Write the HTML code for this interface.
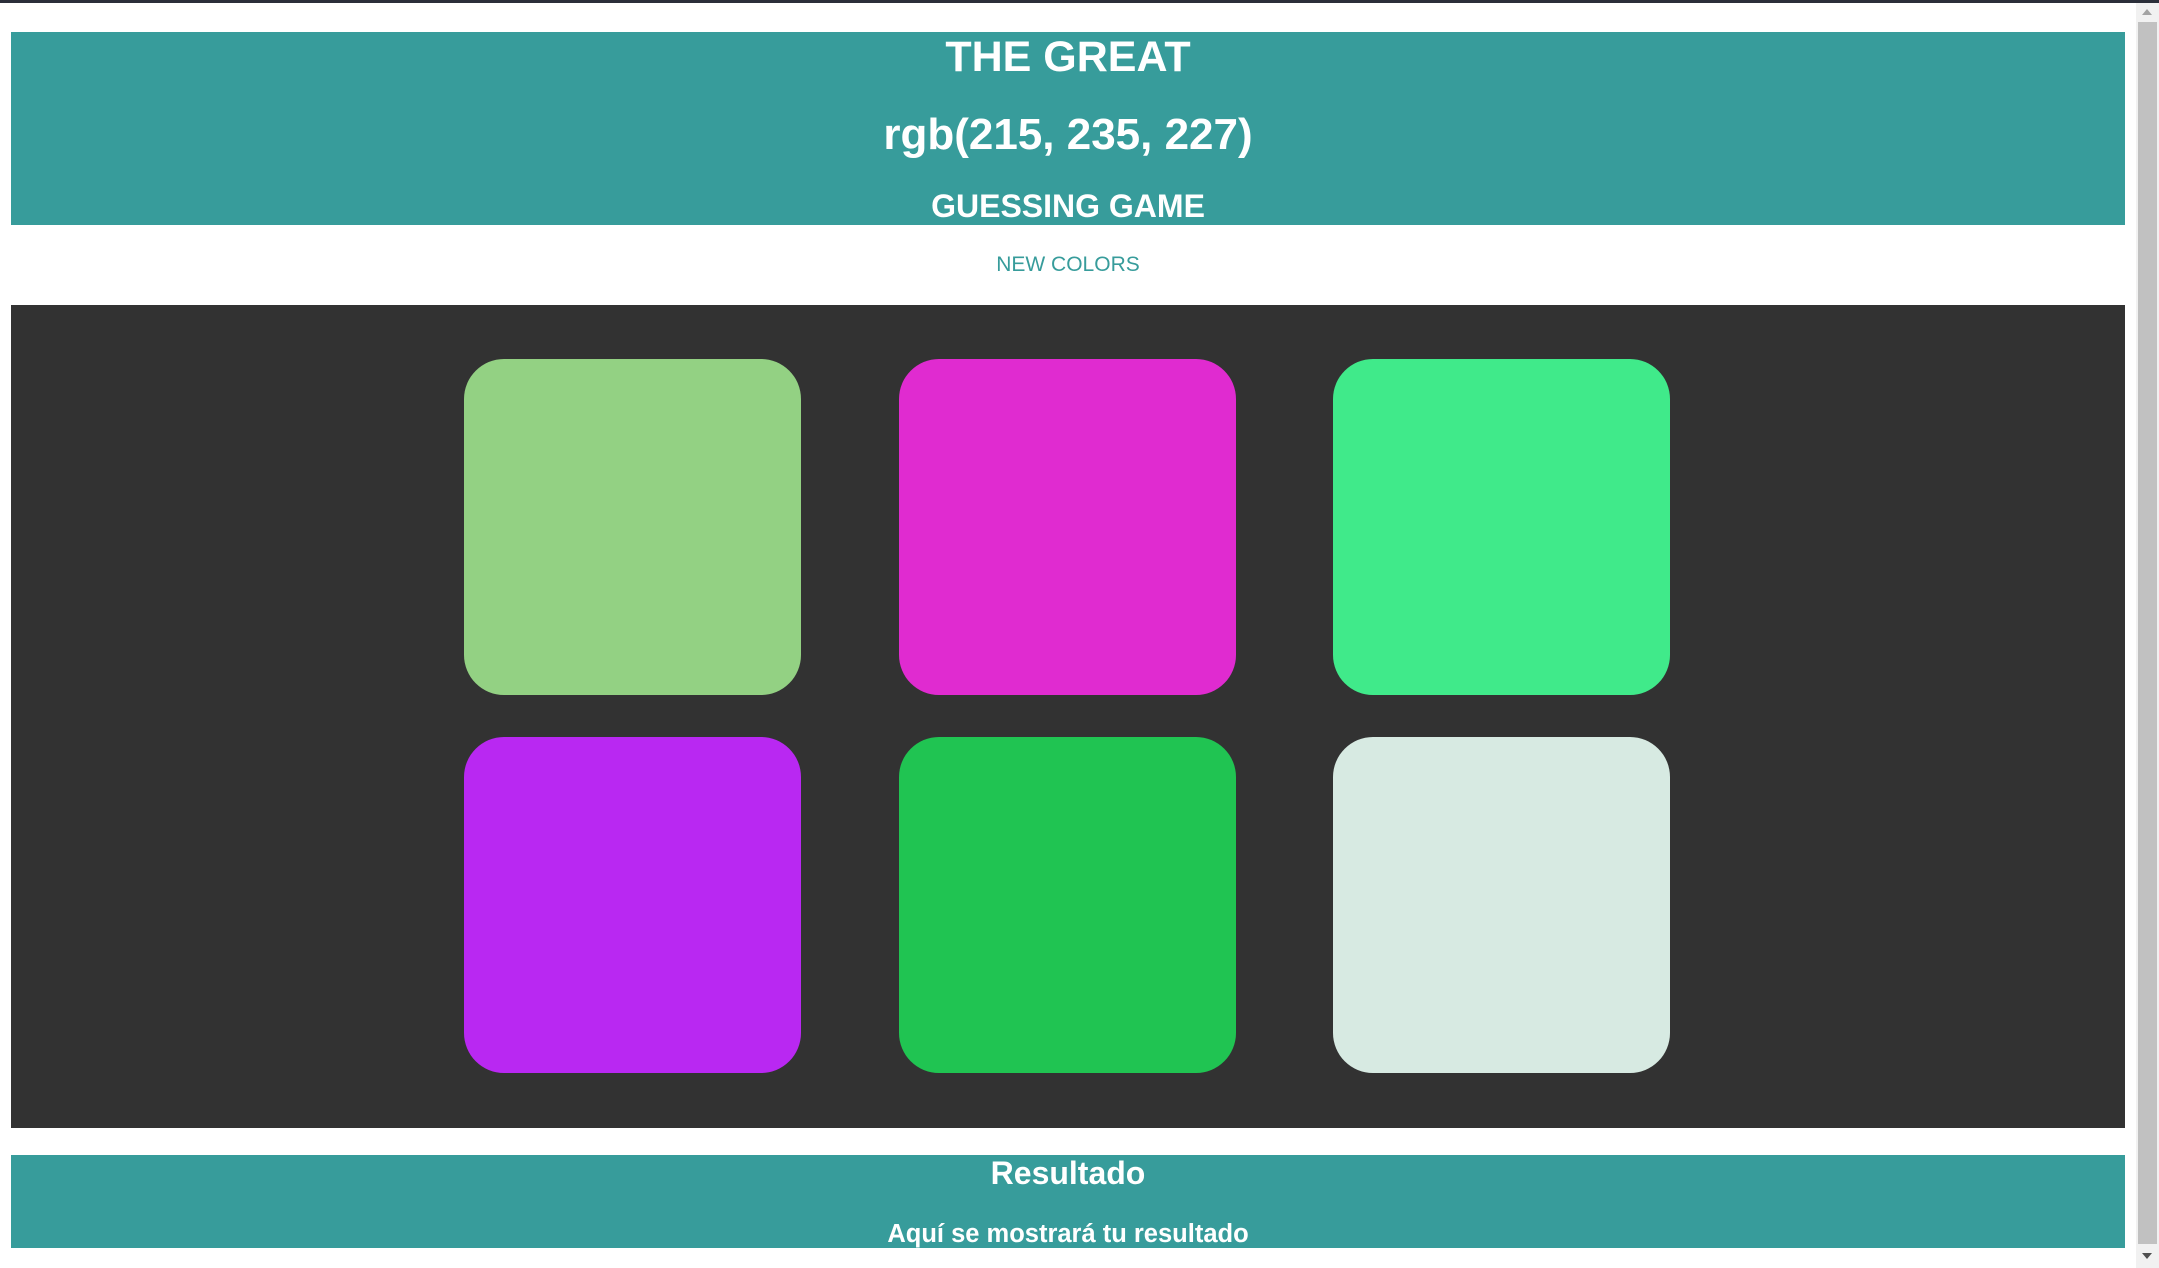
<!DOCTYPE html>
<html><head><meta charset="utf-8"><style>
html,body{margin:0;padding:0;width:2159px;height:1268px;overflow:hidden;background:#fff;font-family:"Liberation Sans",Arial,sans-serif;}
.abs{position:absolute;}
.t{position:absolute;left:11px;width:2114px;text-align:center;color:#fff;font-weight:bold;white-space:nowrap;}
.sq{position:absolute;width:337px;height:336px;border-radius:40px;}
</style></head><body>
<div class="abs" style="left:0;top:0;width:2159px;height:3px;background:#2b2f3a"></div>
<div class="abs" style="left:11px;top:32px;width:2114px;height:193px;background:#379c9b"></div>
<div class="t" style="top:31px;font-size:43px;line-height:52px">THE GREAT</div>
<div class="t" style="top:109px;font-size:44px;line-height:52px">rgb(215, 235, 227)</div>
<div class="t" style="top:186px;font-size:32px;line-height:40px">GUESSING GAME</div>
<div class="t" style="top:251px;font-size:21px;line-height:28px;font-weight:normal;color:#379c9b">NEW COLORS</div>
<div class="abs" style="left:11px;top:305px;width:2114px;height:823px;background:#323232"></div>
<div class="sq" style="left:464px;top:359px;background:#93d183"></div>
<div class="sq" style="left:899px;top:359px;background:#e02bd0"></div>
<div class="sq" style="left:1333px;top:359px;background:#40ea8a"></div>
<div class="sq" style="left:464px;top:737px;background:#b928f2"></div>
<div class="sq" style="left:899px;top:737px;background:#20c452"></div>
<div class="sq" style="left:1333px;top:737px;background:#d7eae2"></div>
<div class="abs" style="left:11px;top:1155px;width:2114px;height:93px;background:#379c9b"></div>
<div class="t" style="top:1153px;font-size:32px;line-height:40px">Resultado</div>
<div class="t" style="top:1219px;font-size:25.5px;line-height:30px">Aquí se mostrará tu resultado</div>
<div class="abs" style="left:2136px;top:3px;width:23px;height:1265px;background:#f1f1f1"></div>
<div class="abs" style="left:2138px;top:22px;width:19px;height:1222px;background:#c1c1c1"></div>
<div class="abs" style="left:2142px;top:1253px;width:0;height:0;border-left:5px solid transparent;border-right:5px solid transparent;border-top:6px solid #505050"></div>
<div class="abs" style="left:2142px;top:9px;width:0;height:0;border-left:5px solid transparent;border-right:5px solid transparent;border-bottom:6px solid #a3a3a3"></div>
</body></html>
